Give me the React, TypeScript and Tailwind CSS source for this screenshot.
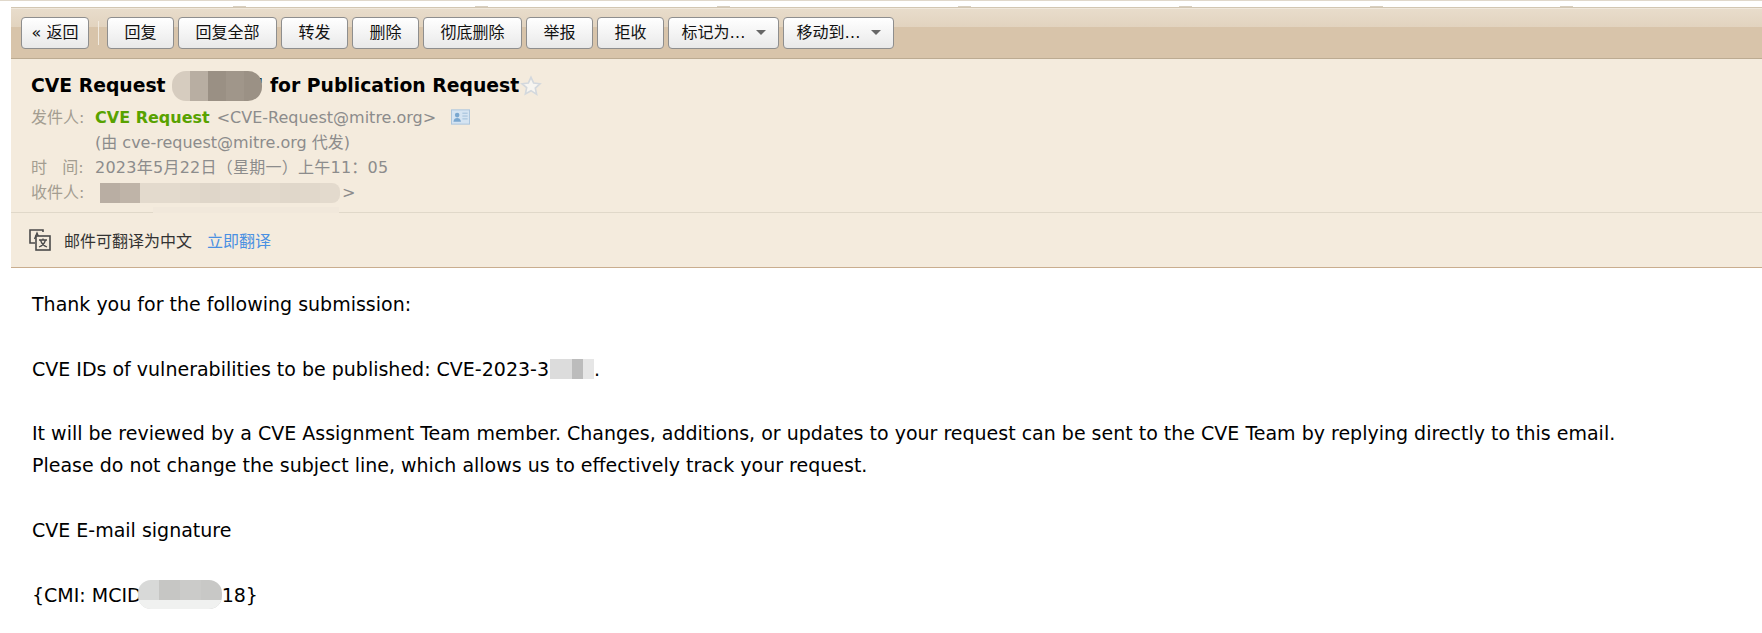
function Btn({ children, w, caret }: { children: React.ReactNode; w: string; caret?: boolean }) {
  return (
    <button className={`${w} h-[32px] shrink-0 flex items-center justify-center gap-[10px] rounded-[4px] border border-[#8e8e8e] bg-gradient-to-b from-white to-[#e9e9e9] text-[16px] text-[#111]`}>
      <span>{children}</span>
      {caret && <span className="w-0 h-0 border-x-[5px] border-x-transparent border-t-[5px] border-t-[#666]" />}
    </button>
  );
}

function Blur({ cells, className, foot }: { cells: string[]; className: string; foot?: string }) {
  return (
    <span className={`flex overflow-hidden relative z-10 ${className}`}>
      {cells.map((c, i) => (
        <span key={i} className="flex-1 h-full" style={{ backgroundColor: c }} />
      ))}
      {foot && <span className="absolute left-0 right-0 bottom-0 h-[9px]" style={{ backgroundColor: foot }} />}
    </span>
  );
}

export default function App() {
  return (
    <div className="relative w-[1762px] h-[633px] overflow-hidden bg-white font-['DejaVu_Sans','Noto_Sans_CJK_SC',sans-serif]">
      <div className="h-[1px] bg-[#e0d8cb]" />
      {[233, 475, 717, 958, 1179, 1370, 1560].map((x) => (
        <span key={x} className="absolute top-[6px] w-[13px] h-[1px] bg-[#d8cfc0]" style={{ left: x }} />
      ))}
      <div className="ml-[11px]">
        <div className="h-[6px] bg-white" />
        <div className="h-[1px] bg-[#d2c6b2]" />
        <div className="h-[51px] border-b border-b-[#bcab92] bg-[#d8c4aa] relative">
          <div className="h-[19px] border-t border-t-[#f0e8dc] bg-gradient-to-b from-[#e8dccb] to-[#e2d3bf]" />
          <div className="absolute inset-0 flex items-center gap-[4px] pl-[10px] pb-[1px]">
            <Btn w="w-[68px]">« 返回</Btn>
            <div className="w-[1px] h-[24px] bg-[#f2ebe0] ml-[5px] mr-[4px]" />
            <Btn w="w-[67px]">回复</Btn>
            <Btn w="w-[99px]">回复全部</Btn>
            <Btn w="w-[67px]">转发</Btn>
            <Btn w="w-[67px]">删除</Btn>
            <Btn w="w-[99px]">彻底删除</Btn>
            <Btn w="w-[67px]">举报</Btn>
            <Btn w="w-[67px]">拒收</Btn>
            <Btn w="w-[111px]" caret>标记为…</Btn>
            <Btn w="w-[111px]" caret>移动到…</Btn>
          </div>
        </div>

        <div className="bg-[#f4ebdd] border-b border-b-[#c9ad8e]">
          <div className="relative h-[154px] border-b border-b-[#e0d8c9] pl-[20px] pt-[14px]">
            <div className="flex items-center h-[26px] text-[18.8px] font-bold text-black whitespace-pre">
              <span>CVE Request</span>
              <Blur cells={["#d6ccbf", "#b8aea2", "#9a9084", "#a0968a", "#9b9185"]} className="ml-[6px] w-[90px] h-[30px] shrink-0 rounded-[14px]" />
              <span className="ml-[-4px]">' for Publication Request</span>
              <svg viewBox="0 0 24 24" className="w-[22px] h-[22px] ml-[1px]" fill="#f7f5f0" stroke="#d3d8dd" strokeWidth="1.8">
                <path d="M12 2.500l2.900 6.300 6.900.8-5.100 4.700 1.400 6.800L12 17.100l-6.100 3.500 1.400-6.800L2.200 9.600l6.900-.8z" />
              </svg>
            </div>
            <div className="mt-[6px] text-[16px] text-[#8c8c8c] leading-[25px]">
              <div className="flex">
                <span className="w-[64px] text-[#a39d91]">发件人:</span>
                <span className="font-bold text-[#58a200]">CVE Request</span>
                <span className="ml-[7px]">&lt;CVE-Request@mitre.org&gt;</span>
                <svg viewBox="0 0 20 16" className="ml-[15px] mt-[4px] w-[19px] h-[16px]">
                  <rect x="0.5" y="0.5" width="19" height="15" fill="#d5e4f2" stroke="#a9c4dc" />
                  <circle cx="6.500" cy="6" r="2.400" fill="#7aa7cf" />
                  <path d="M2.500 13c.5-3 2-4 4-4s3.500 1 4 4z" fill="#7aa7cf" />
                  <path d="M12 4h5.500M12 7h5.500M12 10h5.500" stroke="#9dbcd8" />
                </svg>
              </div>
              <div className="pl-[64px]">(由 cve-request@mitre.org 代发)</div>
              <div className="flex">
                <span className="w-[64px] text-[#a39d91] whitespace-pre">时   间:</span>
                <span className="tracking-[0.25px]">2023年5月22日（星期一）上午11：05</span>
              </div>
              <div className="relative flex items-center">
                <span className="w-[69px] text-[#a39d91]">收件人:</span>
                <Blur cells={["#b9aea3", "#bfb4a8", "#e3dacd", "#e3dacd", "#e1d8cb", "#dfd6c9", "#e1d8cc", "#e0d7ca", "#e2d9cc", "#e0d7ca", "#e1d8cb", "#e3dacd"]} className="w-[240px] h-[20px] shrink-0 rounded-r-[8px]" />
                <span className="ml-[2px]">&gt;</span>
              </div>
            </div>
            <span className="absolute left-[142px] bottom-[-1px] w-[186px] h-[6px] bg-[#f1e8db]" />
          </div>
          <div className="h-[54px] flex items-center pl-[17px] pt-[3px]">
            <svg viewBox="0 0 24 24" className="w-[24px] h-[24px] mt-[-3px]" fill="none" stroke="#4a4a4a" strokeWidth="1.600">
              <path d="M15 4V2H2v13h5" />
              <path d="M6.500 11l2.500-6 2.500 6M7.500 9.500h3" strokeWidth="1.300" />
              <rect x="8" y="8" width="14" height="14" fill="#f4ebdd" />
              <path d="M11 12h8M15 10.500V12M12.500 12c1 3.500 3.500 6 6.500 7M17.500 12c-1 3.500-3.500 6-6.500 7" strokeWidth="1.300" />
            </svg>
            <span className="ml-[12px] text-[16px] text-[#333]">邮件可翻译为中文</span>
            <span className="ml-[15px] text-[16px] text-[#4a90e2]">立即翻译</span>
          </div>
        </div>

        <div className="pl-[21px] pt-[20px] text-[19px] leading-[32.3px] text-black">
          <div>Thank you for the following submission:</div>
          <div>&nbsp;</div>
          <div className="flex items-center">
            <span>CVE IDs of vulnerabilities to be published: CVE-2023-3</span>
            <Blur cells={["#dcdcdc", "#dcdcdc", "#bcbcbc", "#e6e6e6"]} className="ml-[1px] w-[44px] h-[20px]" />
            <span>.</span>
          </div>
          <div>&nbsp;</div>
          <div>It will be reviewed by a CVE Assignment Team member. Changes, additions, or updates to your request can be sent to the CVE Team by replying directly to this email.</div>
          <div>Please do not change the subject line, which allows us to effectively track your request.</div>
          <div>&nbsp;</div>
          <div>CVE E-mail signature</div>
          <div>&nbsp;</div>
          <div className="flex items-center">
            <span>{"{CMI: MCID"}</span>
            <Blur cells={["#d8d9d8", "#c6c6c4", "#cbcbc9", "#c8c8c6"]} foot="#f0f1f0" className="ml-[-4px] w-[84px] h-[29px] rounded-[13px]" />
            <span>{"18}"}</span>
          </div>
        </div>
      </div>
    </div>
  );
}
